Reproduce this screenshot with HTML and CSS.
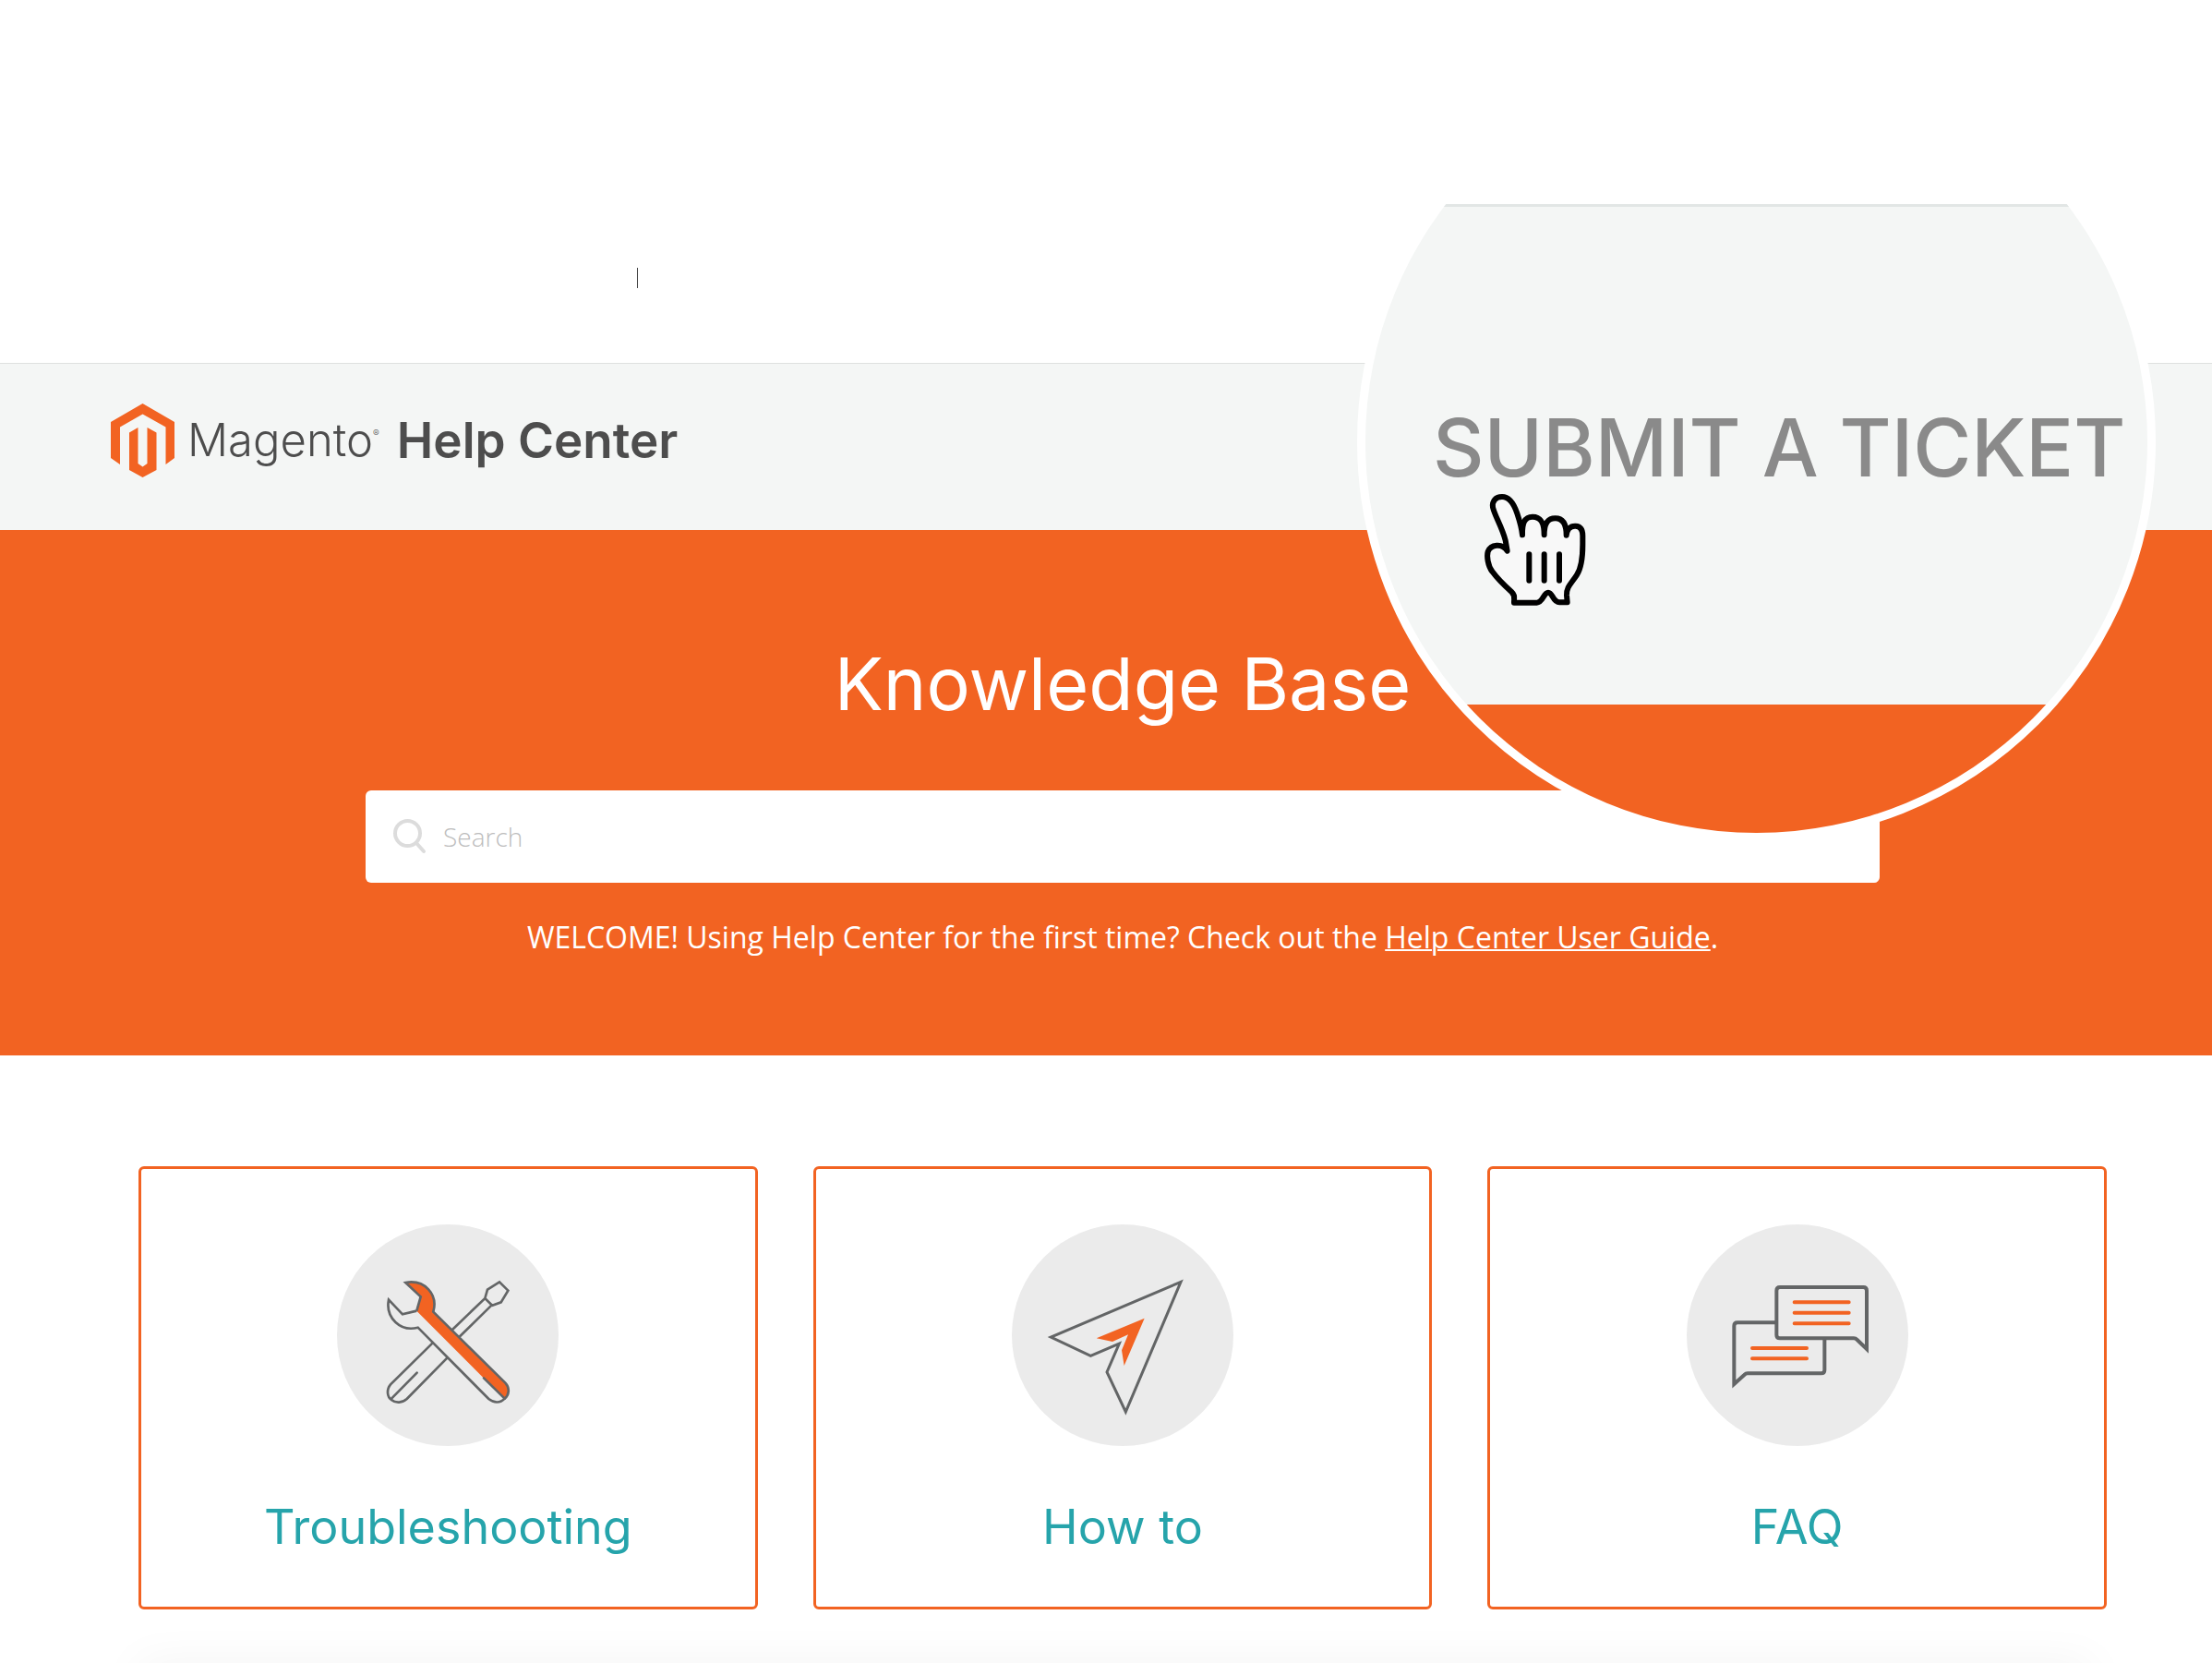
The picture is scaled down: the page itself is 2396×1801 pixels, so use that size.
FILE: index.html
```html
<!DOCTYPE html>
<html lang="en">
<head>
<meta charset="utf-8">
<title>Magento Help Center</title>
<link rel="stylesheet" href="styles.css">
</head>
<body>
<div class="page">
  <div class="topbar"><span class="caret"></span></div>

  <header class="header">
    <a class="brand" href="#">
      <svg class="brand-mark" viewBox="0 0 69 80" aria-hidden="true">
        <path fill="#f26322" d="M34.500 0L69 20V59L59.500 66V25.500L34.500 11.500L10 25.500V66L0 59V20Z"/>
        <path fill="#f26322" d="M29.500 26V65L34.500 68.500L39.500 65V26L49.500 31.500V72L34.500 80L20 72V31.500Z"/>
      </svg>
      <span class="brand-name">Magento<sup class="brand-reg">®</sup></span>
      <span class="brand-title">Help Center</span>
    </a>
  </header>

  <main>
    <section class="hero">
      <h1 class="hero-title">Knowledge Base</h1>
      <form class="search" role="search">
        <svg class="search-icon" viewBox="0 0 36 38" fill="none" stroke="#dcdcdc" stroke-width="4" stroke-linecap="round" aria-hidden="true">
          <circle cx="15.500" cy="15.500" r="13.500"/>
          <path d="M25 26L33 35"/>
        </svg>
        <input class="search-input" type="search" placeholder="Search" aria-label="Search">
      </form>
      <p class="welcome">WELCOME! Using Help Center for the first time? Check out the <a href="#">Help Center User Guide</a>.</p>
    </section>

    <nav class="cards">
      <a class="card" href="#">
        <svg class="card-icon" viewBox="15 18 720 720" fill="none" stroke="#636566" stroke-width="8" aria-hidden="true">
          <circle cx="375" cy="378" r="360" fill="#ebebeb" stroke="none"/>
          <path d="M390 360L496 258L518 280L412 384M496 258L504 230L543 205L571 233L548 271L518 282"/>
          <path d="M326 403L189 538C175 555 178 578 192 588C206 600 228 598 242 585L373 452M190 586L275 500" stroke-linecap="round"/>
          <path fill="#f26322" stroke="none" d="M238 207C300 196 344 245 328 302L562 533C578 550 574 572 558 584L274 299L287 253Z"/>
          <path d="M274 299L287 253L238 207C300 196 344 245 328 302L562 533C578 550 574 572 560 584C545 600 524 598 508 585L278 353C222 368 172 322 183 263L228 310L274 299"/>
          <path d="M560 584L492 517" stroke-linecap="round"/>
        </svg>
        <span class="card-title">Troubleshooting</span>
      </a>
      <a class="card" href="#">
        <svg class="card-icon" viewBox="18 18 720 720" fill="none" stroke="#636566" stroke-width="9" aria-hidden="true">
          <circle cx="378" cy="378" r="360" fill="#ebebeb" stroke="none"/>
          <path d="M567 205L145 384L274 445L367 405L327 498L388 627Z"/>
          <path fill="#f26322" stroke="none" d="M449 323L293 388L345 399L396 376L375 427L383 477Z"/>
        </svg>
        <span class="card-title">How to</span>
      </a>
      <a class="card" href="#">
        <svg class="card-icon" viewBox="21 18 720 720" fill="none" stroke="#636566" stroke-width="12" aria-hidden="true">
          <circle cx="381" cy="378" r="360" fill="#ebebeb" stroke="none"/>
          <path d="M313 337H186Q175 337 175 348V537L208 507Q213 502 219 502H458Q469 502 469 491V388"/>
          <path d="M324 222H595Q606 222 606 233V423L575 393Q570 388 564 388H324Q313 388 313 377V233Q313 222 324 222Z"/>
          <path stroke="#f26322" stroke-linecap="round" d="M371 271H548M371 305H548M371 340H548M234 420H411M234 454H411"/>
        </svg>
        <span class="card-title">FAQ</span>
      </a>
    </nav>
  </main>

  <div class="next"><div class="next-panel"></div></div>

  <div class="lens">
    <div class="lens-bar"><a class="lens-link" href="#">SUBMIT A TICKET</a></div>
    <div class="lens-hero"></div>
  </div>
  <svg class="pointer" viewBox="0 0 480 480" fill="none" stroke="#000" stroke-width="18" stroke-linecap="round" stroke-linejoin="round" aria-hidden="true">
    <path fill="#f8f8f8" d="M158 260L152 226C140 180 118 148 111 118C108 98 120 84 141 84C164 84 180 108 190 138C198 162 204 180 207 208C206 170 214 149 240 149C268 149 278 170 278 208C278 172 288 154 314 154C342 154 350 180 350 209C352 190 362 178 380 179C396 180 403 192 403 210V240C403 290 398 316 384 338C366 366 350 376 351 404L353 427H328C306 428 306 395 291 395C276 395 274 428 254 428H180C180 412 184 404 172 393C146 370 126 350 110 328C94 308 91 276 95 262C104 240 140 232 158 260Z"/>
    <path d="M229 271V356M278 271V356M327 271V356"/>
  </svg>
</div>
</body>
</html>
```
FILE: styles.css
```css
* { box-sizing: border-box; }

body {
  margin: 0;
  background: #fff;
  font-family: Inter, "Liberation Sans", sans-serif;
}

.page {
  position: relative;
  overflow: hidden;
}

.topbar {
  height: 393px;
  padding: 290px 0 0 690px;
}

.caret {
  display: block;
  width: 1px;
  height: 22px;
  background: #444;
}

.header {
  padding: 42px 120px 57px;
  border-top: 1px solid #dfe1e0;
  background: #f4f6f5;
}

.brand {
  display: flex;
  align-items: center;
  width: max-content;
  height: 81px;
  color: #4d4d4d;
  text-decoration: none;
}

.brand-mark {
  width: 69px;
  height: 80px;
  margin-right: 14px;
}

.brand-name {
  display: flex;
  margin-right: 19px;
  font-size: 49px;
  font-weight: 300;
  line-height: 80px;
}

.brand-reg {
  font-size: 10px;
  line-height: 64px;
}

.brand-title {
  font-size: 53px;
  font-weight: 600;
  line-height: 80px;
}

.hero {
  display: flex;
  flex-direction: column;
  align-items: center;
  padding: 116px 360px 104px 396px;
  background: #f26322;
  color: #fff;
}

.hero-title {
  margin: 0 0 66px;
  font-size: 79px;
  font-weight: 400;
  line-height: 100px;
}

.search {
  display: flex;
  align-items: center;
  gap: 18px;
  width: 100%;
  height: 100px;
  padding: 0 30px;
  border-radius: 6px;
  background: #fff;
}

.search-icon {
  width: 36px;
  height: 38px;
}

.search-input {
  flex: 1;
  min-width: 0;
  padding: 0;
  border: 0;
  outline: 0;
  background: none;
  color: #444;
  font: 300 28px/40px "Open Sans", sans-serif;
}

.search-input::placeholder {
  color: #bdbdbd;
  opacity: 1;
}

.welcome {
  margin: 35px 0 0;
  font: 400 32px/48px "Open Sans", sans-serif;
  white-space: nowrap;
}

.welcome a {
  color: inherit;
  text-decoration-thickness: 2px;
}

.cards {
  display: grid;
  grid-template-columns: repeat(3, 1fr);
  gap: 60px;
  padding: 120px 114px 0 150px;
}

.card {
  display: flex;
  flex-direction: column;
  align-items: center;
  padding: 60px 20px 50px;
  border: 3px solid #f26322;
  border-radius: 6px;
  color: #26a4ab;
  text-decoration: none;
}

.card-icon {
  width: 240px;
  height: 240px;
}

.card-title {
  margin-top: 52px;
  font-size: 52px;
  line-height: 72px;
}

.next {
  height: 58px;
  padding: 58px 130px 0 150px;
  overflow: hidden;
}

.next-panel {
  height: 40px;
  box-shadow: 0 0 50px rgba(0, 0, 0, 0.05);
}

/* Magnified view of the ticket link */
.lens {
  position: absolute;
  top: 46px;
  right: 61px;
  display: flex;
  flex-direction: column;
  width: 865px;
  height: 865px;
  padding-top: 166px;
  border: 9px solid #fff;
  border-radius: 50%;
  overflow: hidden;
  background: #fff;
}

.lens-bar {
  display: flex;
  align-items: center;
  height: 542px;
  padding: 0 0 17px 73px;
  border-top: 3px solid #e2e6e5;
  background: #f4f6f5;
}

.lens-hero {
  flex: 1;
  background: #f26322;
}

.lens-link {
  color: #8a8a8a;
  font-size: 86px;
  font-weight: 500;
  line-height: 100px;
  text-decoration: none;
  white-space: nowrap;
}

.pointer {
  position: absolute;
  top: 510px;
  right: 656px;
  width: 160px;
  height: 160px;
}
```
